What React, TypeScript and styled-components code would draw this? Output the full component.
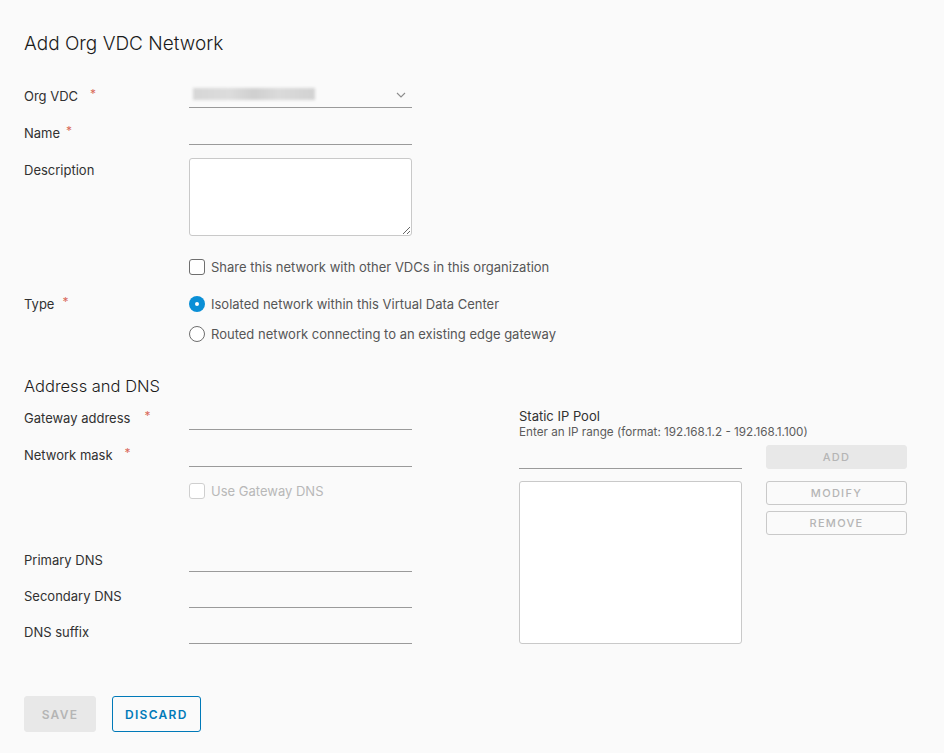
import React from 'react';
import styled, {createGlobalStyle} from "styled-components";

const GlobalStyle = createGlobalStyle`
    html, body {
        margin: 0;
        padding: 0;
        background: #fafafa;
    }

    body {
        font-family: Inter, "Noto Sans", sans-serif;
        color: #313131;
        font-size: 13px;
    }
`

type fieldType = {
    label: string,
    required?: boolean,
    starGap?: number,
    mt?: number,
}

const Field = (props: fieldType) => {
    return (
        <Row $mt={props.mt}>
            <Label>
                {props.label}
                {props.required && <Star $gap={props.starGap}>*</Star>}
            </Label>
            <LineInput/>
        </Row>
    );
};

export default function App() {
    return (
        <Page>
            <GlobalStyle/>
            <Title>Add Org VDC Network</Title>

            <Form $mt={28}>
                <Row $mt={0}>
                    <Label>Org VDC<Star $gap={12}>*</Star></Label>
                    <Select>
                        <Blurred/>
                        <svg width="10" height="6" viewBox="0 0 10 6">
                            <polyline points="1,1 5,5 9,1" fill="none" stroke="#8c8c8c" strokeWidth="1.1"/>
                        </svg>
                    </Select>
                </Row>
                <Field label="Name" required starGap={6} mt={13}/>
                <Row $mt={13} $top>
                    <Label $top>Description</Label>
                    <TextArea/>
                </Row>
                <Row $mt={23}>
                    <span/>
                    <Check>
                        <Box/>
                        Share this network with other VDCs in this organization
                    </Check>
                </Row>
                <Row $mt={21}>
                    <Label>Type<Star $gap={8}>*</Star></Label>
                    <Check>
                        <Radio $checked/>
                        Isolated network within this Virtual Data Center
                    </Check>
                </Row>
                <Row $mt={14}>
                    <span/>
                    <Check>
                        <Radio/>
                        Routed network connecting to an existing edge gateway
                    </Check>
                </Row>
            </Form>

            <SubTitle>Address and DNS</SubTitle>

            <Columns>
                <Form>
                    <Field label="Gateway address" required starGap={14} mt={0}/>
                    <Field label="Network mask" required starGap={12} mt={13}/>
                    <Row $mt={16}>
                        <span/>
                        <Check $disabled>
                            <Box $disabled/>
                            Use Gateway DNS
                        </Check>
                    </Row>
                    <Field label="Primary DNS" mt={49}/>
                    <Field label="Secondary DNS" mt={12}/>
                    <Field label="DNS suffix" mt={12}/>
                </Form>

                <Pool>
                    <PoolTitle>Static IP Pool</PoolTitle>
                    <PoolHint>Enter an IP range (format: 192.168.1.2 - 192.168.1.100)</PoolHint>
                    <PoolGrid>
                        <LineInput/>
                        <SmallButton $filled>Add</SmallButton>
                        <ListBox/>
                        <ButtonStack>
                            <SmallButton>Modify</SmallButton>
                            <SmallButton>Remove</SmallButton>
                        </ButtonStack>
                    </PoolGrid>
                </Pool>
            </Columns>

            <Footer>
                <Button $disabled>Save</Button>
                <Button>Discard</Button>
            </Footer>
        </Page>
    );
}

const Page = styled.div`
    padding: 32px 24px 20px;
    min-height: 753px;
    box-sizing: border-box;
`

const Title = styled.h1`
    margin: 0;
    font-size: 19px;
    line-height: 24px;
    font-weight: 300;
    color: #1a1a1a;
`

const SubTitle = styled.h2`
    margin: 33px 0 0;
    font-size: 16.5px;
    line-height: 22px;
    font-weight: 300;
    color: #1a1a1a;
`

const Form = styled.div<{ $mt?: number }>`
    display: flex;
    flex-direction: column;
    margin-top: ${props => props.$mt ?? 0}px;
`

const Row = styled.div<{ $mt?: number, $top?: boolean }>`
    display: grid;
    grid-template-columns: 165px 223px;
    align-items: ${props => props.$top ? "start" : "center"};
    margin-top: ${props => props.$mt ?? 0}px;
`

const Label = styled.label<{ $top?: boolean }>`
    display: flex;
    align-items: flex-start;
    font-size: 13px;
    line-height: 16px;
    color: #313131;
    padding-top: ${props => props.$top ? "4px" : "0"};
`

const Star = styled.span<{ $gap?: number }>`
    color: #d96a5a;
    margin-left: ${props => props.$gap ?? 6}px;
    font-size: 12px;
    line-height: 12px;
`

const LineInput = styled.div`
    height: 24px;
    border-bottom: 1px solid #9a9a9a;
    box-sizing: border-box;
`

const Select = styled(LineInput)`
    display: flex;
    align-items: center;
    justify-content: space-between;
    padding: 0 6px 2px 4px;

    svg {
        margin-top: 1px;
    }
`

const Blurred = styled.div`
    width: 122px;
    height: 12px;
    background: linear-gradient(90deg, #d6d6d6 0%, #dcdcdc 30%, #cfcfcf 50%, #dadada 70%, #d2d2d2 100%);
    filter: blur(1.5px);
    margin-top: -2px;
`

const TextArea = styled.textarea`
    height: 78px;
    box-sizing: border-box;
    background: #fff;
    border: 1px solid #c9c9c9;
    border-radius: 3px;
    resize: vertical;
    margin: 0;
`

const Check = styled.label<{ $disabled?: boolean }>`
    display: flex;
    align-items: center;
    gap: 6px;
    white-space: nowrap;
    font-size: 13px;
    line-height: 16px;
    color: ${props => props.$disabled ? "#b8b8b8" : "#565656"};
`

const Box = styled.span<{ $disabled?: boolean }>`
    width: 16px;
    height: 16px;
    box-sizing: border-box;
    border: 1px solid ${props => props.$disabled ? "#cfcfcf" : "#6e6e6e"};
    border-radius: 3px;
    background: #fff;
    flex-shrink: 0;
`

const Radio = styled.span<{ $checked?: boolean }>`
    width: 16px;
    height: 16px;
    box-sizing: border-box;
    border-radius: 50%;
    flex-shrink: 0;
    background: #fff;
    border: ${props => props.$checked ? "none" : "1px solid #6e6e6e"};
    box-shadow: ${props => props.$checked ? "inset 0 0 0 6px #0a8fd6" : "none"};
`

const Columns = styled.div`
    display: grid;
    grid-template-columns: 388px 1fr;
    gap: 107px;
    margin-top: 9px;
`

const Pool = styled.div`
    display: flex;
    flex-direction: column;
    padding-top: 2px;
`

const PoolTitle = styled.div`
    font-size: 13px;
    line-height: 16px;
    color: #313131;
`

const PoolHint = styled.div`
    font-size: 11.7px;
    line-height: 14px;
    color: #5c5c5c;
    margin-top: 1px;
`

const PoolGrid = styled.div`
    display: grid;
    grid-template-columns: 223px 141px;
    column-gap: 24px;
    row-gap: 12px;
    margin-top: 6px;
    align-items: start;
`

const ListBox = styled.div`
    height: 163px;
    background: #fff;
    border: 1px solid #c9c9c9;
    border-radius: 3px;
    box-sizing: border-box;
`

const ButtonStack = styled.div`
    display: flex;
    flex-direction: column;
    gap: 6px;
`

const SmallButton = styled.button<{ $filled?: boolean }>`
    height: 24px;
    margin: 0;
    padding: 0;
    box-sizing: border-box;
    border-radius: 3px;
    border: 1px solid ${props => props.$filled ? "#e8e8e8" : "#c9c9c9"};
    background: ${props => props.$filled ? "#e8e8e8" : "transparent"};
    color: #b5b5b5;
    font-family: Inter, "Noto Sans", sans-serif;
    font-size: 11px;
    font-weight: 500;
    letter-spacing: 1.3px;
    text-transform: uppercase;
`

const Footer = styled.div`
    display: flex;
    gap: 16px;
    margin-top: 52px;
`

const Button = styled.button<{ $disabled?: boolean }>`
    height: 36px;
    padding: 0 12px;
    min-width: 72px;
    box-sizing: border-box;
    border-radius: 3px;
    border: 1px solid ${props => props.$disabled ? "#e8e8e8" : "#0079b8"};
    background: ${props => props.$disabled ? "#e8e8e8" : "transparent"};
    color: ${props => props.$disabled ? "#b5b5b5" : "#0079b8"};
    font-family: Inter, "Noto Sans", sans-serif;
    font-size: 12px;
    font-weight: 600;
    letter-spacing: 1.3px;
    text-transform: uppercase;
`
